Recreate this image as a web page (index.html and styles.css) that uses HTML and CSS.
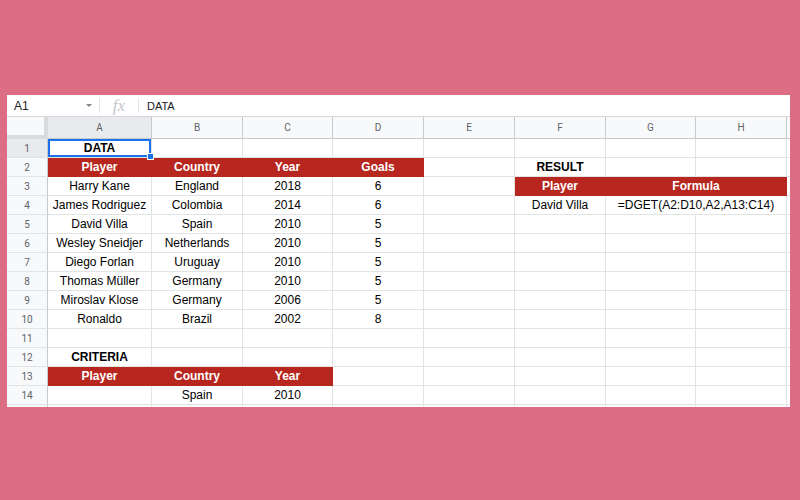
FILE: index.html
```html
<!DOCTYPE html>
<html>
<head>
<meta charset="utf-8">
<link rel="stylesheet" href="styles.css">
</head>
<body>
<div class="sheet">
  <div class="fbar">
    <div class="namebox"><span class="ref">A1</span><span class="caret"></span></div>
    <div class="fx">fx</div>
    <div class="fval">DATA</div>
  </div>
  <div class="grid">
    <div class="corner"></div>
    <div class="ch sel">A</div><div class="ch">B</div><div class="ch">C</div><div class="ch">D</div><div class="ch">E</div><div class="ch">F</div><div class="ch">G</div><div class="ch">H</div><div class="ch"></div>

    <div class="rh sel">1</div>
    <div class="c b active">DATA</div><div class="c"></div><div class="c"></div><div class="c"></div><div class="c"></div><div class="c"></div><div class="c"></div><div class="c"></div><div class="c"></div>

    <div class="rh">2</div>
    <div class="c red">Player</div><div class="c red">Country</div><div class="c red">Year</div><div class="c red">Goals</div><div class="c"></div><div class="c b">RESULT</div><div class="c"></div><div class="c"></div><div class="c"></div>

    <div class="rh">3</div>
    <div class="c">Harry Kane</div><div class="c">England</div><div class="c">2018</div><div class="c">6</div><div class="c"></div><div class="c red">Player</div><div class="c red span2">Formula</div><div class="c"></div>

    <div class="rh">4</div>
    <div class="c">James Rodriguez</div><div class="c">Colombia</div><div class="c">2014</div><div class="c">6</div><div class="c"></div><div class="c">David Villa</div><div class="c span2">=DGET(A2:D10,A2,A13:C14)</div><div class="c"></div>

    <div class="rh">5</div>
    <div class="c">David Villa</div><div class="c">Spain</div><div class="c">2010</div><div class="c">5</div><div class="c"></div><div class="c"></div><div class="c"></div><div class="c"></div><div class="c"></div>

    <div class="rh">6</div>
    <div class="c">Wesley Sneidjer</div><div class="c">Netherlands</div><div class="c">2010</div><div class="c">5</div><div class="c"></div><div class="c"></div><div class="c"></div><div class="c"></div><div class="c"></div>

    <div class="rh">7</div>
    <div class="c">Diego Forlan</div><div class="c">Uruguay</div><div class="c">2010</div><div class="c">5</div><div class="c"></div><div class="c"></div><div class="c"></div><div class="c"></div><div class="c"></div>

    <div class="rh">8</div>
    <div class="c">Thomas Müller</div><div class="c">Germany</div><div class="c">2010</div><div class="c">5</div><div class="c"></div><div class="c"></div><div class="c"></div><div class="c"></div><div class="c"></div>

    <div class="rh">9</div>
    <div class="c">Miroslav Klose</div><div class="c">Germany</div><div class="c">2006</div><div class="c">5</div><div class="c"></div><div class="c"></div><div class="c"></div><div class="c"></div><div class="c"></div>

    <div class="rh">10</div>
    <div class="c">Ronaldo</div><div class="c">Brazil</div><div class="c">2002</div><div class="c">8</div><div class="c"></div><div class="c"></div><div class="c"></div><div class="c"></div><div class="c"></div>

    <div class="rh">11</div>
    <div class="c"></div><div class="c"></div><div class="c"></div><div class="c"></div><div class="c"></div><div class="c"></div><div class="c"></div><div class="c"></div><div class="c"></div>

    <div class="rh">12</div>
    <div class="c b">CRITERIA</div><div class="c"></div><div class="c"></div><div class="c"></div><div class="c"></div><div class="c"></div><div class="c"></div><div class="c"></div><div class="c"></div>

    <div class="rh">13</div>
    <div class="c red">Player</div><div class="c red">Country</div><div class="c red">Year</div><div class="c"></div><div class="c"></div><div class="c"></div><div class="c"></div><div class="c"></div><div class="c"></div>

    <div class="rh">14</div>
    <div class="c"></div><div class="c">Spain</div><div class="c">2010</div><div class="c"></div><div class="c"></div><div class="c"></div><div class="c"></div><div class="c"></div><div class="c"></div>

    <div class="rh"></div>
    <div class="c"></div><div class="c"></div><div class="c"></div><div class="c"></div><div class="c"></div><div class="c"></div><div class="c"></div><div class="c"></div><div class="c"></div>
  </div>
</div>
</body>
</html>
```

FILE: styles.css
```css
html, body {
  margin: 0;
  padding: 0;
}
body {
  background: #dd6c85;
  width: 800px;
  height: 500px;
  overflow: hidden;
  padding: 95px 0 0 7px;
  box-sizing: border-box;
  font-family: "Liberation Sans", Arial, sans-serif;
}
.sheet {
  width: 783px;
  height: 312px;
  background: #ffffff;
  overflow: hidden;
}
.fbar {
  height: 21px;
  display: flex;
  align-items: center;
  border-bottom: 1px solid #d5d7da;
  box-sizing: content-box;
}
.namebox {
  width: 93px;
  height: 15px;
  display: flex;
  align-items: center;
  justify-content: space-between;
  padding: 0 7px 0 7px;
  border-right: 1px solid #e3e5e8;
  box-sizing: border-box;
}
.ref {
  font-size: 12px;
  color: #202124;
}
.caret {
  width: 0;
  height: 0;
  border-left: 3px solid transparent;
  border-right: 3px solid transparent;
  border-top: 3px solid #80868b;
}
.fx {
  width: 39px;
  height: 15px;
  line-height: 15px;
  text-align: center;
  font-family: "Liberation Serif", serif;
  font-style: italic;
  font-size: 17px;
  color: #c3c6ca;
  border-right: 1px solid #e3e5e8;
  box-sizing: border-box;
}
.fval {
  padding-left: 8px;
  font-size: 11px;
  color: #202124;
}
.grid {
  display: grid;
  grid-template-columns: 41px 104px 91px 90px 91px 91px 91px 90px 91px 30px;
  grid-template-rows: 22px repeat(15, 19px);
}
.grid > div {
  box-sizing: border-box;
  display: flex;
  align-items: center;
  justify-content: center;
  white-space: nowrap;
  overflow: hidden;
}
.corner {
  background: #f8f9fa;
  border-right: 4px solid #d9dbde;
  border-bottom: 4px solid #d9dbde;
}
.ch {
  background: #f8f9fa;
  border-right: 1px solid #c7c9cc;
  border-bottom: 1px solid #c7c9cc;
  font-size: 10px;
  color: #5f6368;
  font-family: Roboto, "Liberation Sans", sans-serif;
}
.rh {
  background: #f8f9fa;
  border-right: 1px solid #c7c9cc;
  border-bottom: 1px solid #e2e3e5;
  font-size: 10px;
  color: #5f6368;
  font-family: Roboto, "Liberation Sans", sans-serif;
}
.ch.sel, .rh.sel {
  background: #e8eaed;
}
.c {
  border-right: 1px solid #e2e3e3;
  border-bottom: 1px solid #e2e3e3;
  font-size: 12px;
  color: #000000;
}
.b {
  font-weight: bold;
}
.red {
  background: #b7271f;
  border-right-color: #b7271f;
  border-bottom-color: #b7271f;
  color: #ffffff;
  font-weight: bold;
}
.span2 {
  grid-column: span 2;
}
.grid > .active {
  position: relative;
  overflow: visible;
  box-shadow: inset 0 0 0 2px #1a73e8;
}
.active::after {
  content: "";
  position: absolute;
  right: -3px;
  bottom: -3px;
  width: 5px;
  height: 5px;
  background: #1a73e8;
  border: 1px solid #ffffff;
  z-index: 2;
}
```
